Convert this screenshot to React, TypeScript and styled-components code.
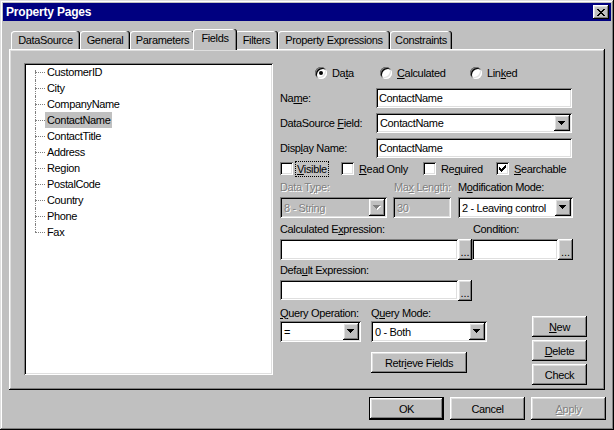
import React from "react";
import styled, { createGlobalStyle, css } from "styled-components";

const GlobalStyle = createGlobalStyle`
  html, body { margin: 0; padding: 0; background: #c0c0c0; }
  body {
    font-family: "Liberation Sans", Arial, sans-serif;
    font-size: 11px;
    letter-spacing: -0.35px;
    color: #000;
  }
  * { box-sizing: border-box; }
`;

const raised = css`
  box-shadow: inset -1px -1px #000, inset 1px 1px #fff, inset -2px -2px #808080, inset 2px 2px #dfdfdf;
`;

const sunken = css`
  box-shadow: inset 1px 1px #808080, inset -1px -1px #fff, inset 2px 2px #000, inset -2px -2px #dfdfdf;
`;

const disabledText = css`
  color: #808080;
  text-shadow: 1px 1px #fff;
`;

const Window = styled.div`
  width: 614px;
  height: 430px;
  padding: 3px;
  background: #c0c0c0;
  display: flex;
  flex-direction: column;
  box-shadow: inset -1px -1px #000, inset 1px 1px #dfdfdf, inset -2px -2px #808080, inset 2px 2px #fff;
`;

const TitleBar = styled.div`
  height: 18px;
  background: #000080;
  display: flex;
  align-items: center;
  padding: 0 2px 0 3px;
`;

const Title = styled.span`
  flex: 1;
  color: #fff;
  font-weight: bold;
  font-size: 12px;
  letter-spacing: -0.2px;
`;

const CloseButton = styled.span`
  width: 16px;
  height: 14px;
  background: #c0c0c0;
  display: flex;
  align-items: center;
  justify-content: center;
  padding-right: 1px;
  ${raised}
`;

const Body = styled.div`
  flex: 1;
  display: flex;
  flex-direction: column;
  padding: 8px 0 0 6px;
`;

const TabStrip = styled.div`
  display: flex;
  align-items: flex-end;
  height: 20px;
  padding-left: 2px;
`;

const Tab = styled.div<{ $active?: boolean; $w: number }>`
  width: ${(p) => p.$w}px;
  height: ${(p) => (p.$active ? 21 : 18)}px;
  margin: 0 ${(p) => (p.$active ? -2 : 0)}px ${(p) => (p.$active ? -1 : 0)}px;
  padding-top: ${(p) => (p.$active ? 3 : 3)}px;
  position: relative;
  z-index: ${(p) => (p.$active ? 2 : 0)};
  text-align: center;
  background: #c0c0c0;
  border-radius: 3px 3px 0 0;
  white-space: nowrap;
  box-shadow: inset -1px 0 #000, inset -2px 0 #808080, inset 1px 1px #fff;
`;

const Panel = styled.div`
  width: 596px;
  height: 341px;
  display: flex;
  gap: 7px;
  padding: 14px 0 0 15px;
  ${raised}
`;

const TreeBox = styled.div`
  width: 249px;
  height: 312px;
  background: #fff;
  padding: 1px 0 0 11px;
  ${sunken}
`;

const TreeList = styled.ul`
  list-style: none;
  margin: 0;
  padding: 0;
`;

const TreeItem = styled.li<{ $first?: boolean; $last?: boolean }>`
  height: 16px;
  display: flex;
  align-items: center;
  position: relative;

  &::before {
    content: "";
    position: absolute;
    left: 0;
    top: ${(p) => (p.$first ? "6px" : "0")};
    bottom: ${(p) => (p.$last ? "8px" : "0")};
    border-left: 1px dotted #808080;
  }
`;

const Connector = styled.span`
  width: 10px;
  border-top: 1px dotted #808080;
`;

const ItemText = styled.span<{ $selected?: boolean }>`
  line-height: 16px;
  padding: 0 2px;
  background: ${(p) => (p.$selected ? "#c0c0c0" : "transparent")};
`;

const FormColumn = styled.div`
  width: 294px;
  display: flex;
  flex-direction: column;
`;

const Row = styled.div<{ $mt?: number; $h: number }>`
  display: flex;
  align-items: center;
  height: ${(p) => p.$h}px;
  margin-top: ${(p) => p.$mt ?? 0}px;
  white-space: nowrap;
`;

const Caption = styled.span<{ $w?: number; $off?: number; $disabled?: boolean }>`
  width: ${(p) => (p.$w ? `${p.$w}px` : "auto")};
  margin-left: ${(p) => p.$off ?? 0}px;
  flex: none;
  ${(p) => p.$disabled && disabledText}
`;

const Option = styled.label<{ $w?: number; $off?: number }>`
  display: flex;
  align-items: center;
  gap: 5px;
  width: ${(p) => (p.$w ? `${p.$w}px` : "auto")};
  margin-left: ${(p) => p.$off ?? 0}px;
  flex: none;
`;

const RadioMark = styled.span<{ $checked?: boolean }>`
  width: 12px;
  height: 12px;
  flex: none;
  border-radius: 50%;
  background: #fff;
  display: flex;
  align-items: center;
  justify-content: center;
  box-shadow: inset 1px 1px #808080, inset -1px -1px #fff, inset 2px 2px #000, inset -2px -2px #dfdfdf;

  &::after {
    content: "";
    width: 4px;
    height: 4px;
    border-radius: 50%;
    background: ${(p) => (p.$checked ? "#000" : "transparent")};
  }
`;

const CheckMark = styled.span`
  width: 13px;
  height: 13px;
  flex: none;
  background: #fff;
  display: flex;
  ${sunken}
`;

const Focus = styled.span`
  outline: 1px dotted #000;
  outline-offset: 0;
  padding: 0 1px;
  margin-left: -2px;
  line-height: 14px;
`;

const TextBox = styled.div<{ $w: number; $h?: number; $disabled?: boolean }>`
  width: ${(p) => p.$w}px;
  height: ${(p) => p.$h ?? 21}px;
  flex: none;
  display: flex;
  align-items: center;
  padding: 0 3px;
  background: ${(p) => (p.$disabled ? "#c0c0c0" : "#fff")};
  ${(p) => p.$disabled && disabledText}
  ${sunken}
`;

const ComboBox = styled.div<{ $w: number; $h?: number; $off?: number; $disabled?: boolean }>`
  width: ${(p) => p.$w}px;
  height: ${(p) => p.$h ?? 21}px;
  margin-left: ${(p) => p.$off ?? 0}px;
  flex: none;
  display: flex;
  padding: 2px;
  background: ${(p) => (p.$disabled ? "#c0c0c0" : "#fff")};
  ${sunken}
`;

const ComboValue = styled.span<{ $disabled?: boolean }>`
  flex: 1;
  display: flex;
  align-items: center;
  padding-left: 2px;
  overflow: hidden;
  ${(p) => p.$disabled && disabledText}
`;

const DropButton = styled.span`
  width: 16px;
  flex: none;
  display: flex;
  align-items: center;
  justify-content: center;
  background: #c0c0c0;
  ${raised}
`;

const EllipsisButton = styled.span<{ $w: number }>`
  width: ${(p) => p.$w}px;
  height: 21px;
  flex: none;
  display: flex;
  align-items: flex-end;
  justify-content: center;
  padding-bottom: 4px;
  line-height: 8px;
  letter-spacing: 0;
  background: #c0c0c0;
  ${raised}
`;

const Bottom = styled.div`
  display: flex;
  margin-top: 6px;
`;

const QueryColumn = styled.div`
  width: 207px;
  display: flex;
  flex-direction: column;
`;

const SideButtons = styled.div`
  display: flex;
  flex-direction: column;
  gap: 3px;
  margin: 10px 0 0 45px;
`;

const PushButton = styled.button<{ $w: number; $h: number; $off?: number; $default?: boolean }>`
  width: ${(p) => p.$w}px;
  height: ${(p) => p.$h}px;
  margin: 0 0 0 ${(p) => p.$off ?? 0}px;
  padding: 0;
  font: inherit;
  letter-spacing: inherit;
  color: #000;
  background: #c0c0c0;
  border: ${(p) => (p.$default ? "1px solid #000" : "none")};
  ${raised}

  &:disabled {
    ${disabledText}
  }
`;

const DialogButtons = styled.div`
  display: flex;
  justify-content: flex-end;
  gap: 6px;
  margin-top: 7px;
  padding-right: 5px;
`;

const Arrow = ({ disabled }: { disabled?: boolean }) => (
  <svg width="8" height="5" viewBox="0 0 8 5" shapeRendering="crispEdges">
    {disabled && (
      <path d="M1 1h7v1H1zM2 2h5v1H2zM3 3h3v1H3zM4 4h1v1H4z" fill="#fff" />
    )}
    <path d="M0 0h7v1H0zM1 1h5v1H1zM2 2h3v1H2zM3 3h1v1H3z" fill={disabled ? "#808080" : "#000"} />
  </svg>
);

const CloseGlyph = () => (
  <svg width="8" height="7" viewBox="0 0 8 7" shapeRendering="crispEdges">
    <path
      d="M0 0h2v1H0zM6 0h2v1H6zM1 1h2v1H1zM5 1h2v1H5zM2 2h4v1H2zM3 3h2v1H3zM2 4h4v1H2zM1 5h2v1H1zM5 5h2v1H5zM0 6h2v1H0zM6 6h2v1H6z"
      fill="#000"
    />
  </svg>
);

const Tick = () => (
  <svg width="13" height="13" viewBox="0 0 13 13" shapeRendering="crispEdges">
    <path
      d="M3 5h1v3H3zM4 6h1v3H4zM5 7h1v3H5zM6 6h1v3H6zM7 5h1v3H7zM8 4h1v3H8zM9 3h1v3H9z"
      fill="#000"
    />
  </svg>
);

const Combo = ({
  w,
  h,
  off,
  value,
  disabled,
}: {
  w: number;
  h?: number;
  off?: number;
  value: string;
  disabled?: boolean;
}) => (
  <ComboBox $w={w} $h={h} $off={off} $disabled={disabled}>
    <ComboValue $disabled={disabled}>{value}</ComboValue>
    <DropButton>
      <Arrow disabled={disabled} />
    </DropButton>
  </ComboBox>
);

const tabs = [
  { label: "DataSource", w: 69 },
  { label: "General", w: 50 },
  { label: "Parameters", w: 65 },
  { label: "Fields", w: 40, active: true },
  { label: "Filters", w: 43 },
  { label: "Property Expressions", w: 112 },
  { label: "Constraints", w: 62 },
];

const fields = [
  "CustomerID",
  "City",
  "CompanyName",
  "ContactName",
  "ContactTitle",
  "Address",
  "Region",
  "PostalCode",
  "Country",
  "Phone",
  "Fax",
];

export default function App() {
  return (
    <>
      <GlobalStyle />
      <Window>
        <TitleBar>
          <Title>Property Pages</Title>
          <CloseButton>
            <CloseGlyph />
          </CloseButton>
        </TitleBar>
        <Body>
          <TabStrip>
            {tabs.map((t) => (
              <Tab key={t.label} $w={t.active ? t.w + 4 : t.w} $active={t.active}>
                {t.label}
              </Tab>
            ))}
          </TabStrip>
          <Panel>
            <TreeBox>
              <TreeList>
                {fields.map((f, i) => (
                  <TreeItem key={f} $first={i === 0} $last={i === fields.length - 1}>
                    <Connector />
                    <ItemText $selected={f === "ContactName"}>{f}</ItemText>
                  </TreeItem>
                ))}
              </TreeList>
            </TreeBox>

            <FormColumn>
              <Row $h={20}>
                <Option $w={65} $off={35}>
                  <RadioMark $checked />
                  <span>
                    Da<u>t</u>a
                  </span>
                </Option>
                <Option $w={90}>
                  <RadioMark />
                  <span>
                    <u>C</u>alculated
                  </span>
                </Option>
                <Option>
                  <RadioMark />
                  <span>
                    Lin<u>k</u>ed
                  </span>
                </Option>
              </Row>

              <Row $mt={5} $h={20}>
                <Caption $w={96}>
                  Na<u>m</u>e:
                </Caption>
                <TextBox $w={196} $h={20}>ContactName</TextBox>
              </Row>
              <Row $mt={5} $h={20}>
                <Caption $w={96}>
                  DataSource <u>F</u>ield:
                </Caption>
                <Combo w={196} h={20} value="ContactName" />
              </Row>
              <Row $mt={5} $h={20}>
                <Caption $w={96}>
                  Disp<u>l</u>ay Name:
                </Caption>
                <TextBox $w={196} $h={20}>ContactName</TextBox>
              </Row>

              <Row $mt={2} $h={17}>
                <Option $w={61}>
                  <CheckMark />
                  <Focus>
                    <u>V</u>isible
                  </Focus>
                </Option>
                <Option $w={82}>
                  <CheckMark />
                  <span>
                    <u>R</u>ead Only
                  </span>
                </Option>
                <Option $w={73}>
                  <CheckMark />
                  <span>
                    Re<u>q</u>uired
                  </span>
                </Option>
                <Option>
                  <CheckMark>
                    <Tick />
                  </CheckMark>
                  <span>
                    <u>S</u>earchable
                  </span>
                </Option>
              </Row>

              <Row $mt={3} $h={13}>
                <Caption $w={114} $disabled>
                  Data T<u>y</u>pe:
                </Caption>
                <Caption $w={64} $disabled>
                  Ma<u>x</u> Length:
                </Caption>
                <Caption>
                  M<u>o</u>dification Mode:
                </Caption>
              </Row>
              <Row $mt={4} $h={21}>
                <Combo w={107} value="8 - String" disabled />
                <ComboBox as="div" $w={58} $off={6} $disabled>
                  <ComboValue $disabled>30</ComboValue>
                </ComboBox>
                <Combo w={115} off={7} value="2 - Leaving control" />
              </Row>

              <Row $mt={4} $h={13}>
                <Caption $w={193}>
                  Calculated E<u>x</u>pression:
                </Caption>
                <Caption>Condition:</Caption>
              </Row>
              <Row $mt={4} $h={21}>
                <TextBox $w={178} />
                <EllipsisButton $w={14}>...</EllipsisButton>
                <TextBox $w={86} />
                <EllipsisButton $w={15}>...</EllipsisButton>
              </Row>

              <Row $mt={3} $h={13}>
                <Caption>
                  Defa<u>u</u>lt Expression:
                </Caption>
              </Row>
              <Row $mt={4} $h={20}>
                <TextBox $w={178} $h={20} />
                <EllipsisButton $w={14}>...</EllipsisButton>
              </Row>

              <Bottom>
                <QueryColumn>
                  <Row $h={13}>
                    <Caption $w={91}>
                      <u>Q</u>uery Operation:
                    </Caption>
                    <Caption>
                      Q<u>u</u>ery Mode:
                    </Caption>
                  </Row>
                  <Row $mt={2} $h={21}>
                    <Combo w={81} value="=" />
                    <Combo w={116} off={10} value="0 - Both" />
                  </Row>
                  <Row $mt={10} $h={21}>
                    <PushButton $w={96} $h={21} $off={91}>
                      Retr<u>i</u>eve Fields
                    </PushButton>
                  </Row>
                </QueryColumn>
                <SideButtons>
                  <PushButton $w={55} $h={21}>
                    <u>N</u>ew
                  </PushButton>
                  <PushButton $w={55} $h={21}>
                    <u>D</u>elete
                  </PushButton>
                  <PushButton $w={55} $h={21}>
                    Check
                  </PushButton>
                </SideButtons>
              </Bottom>
            </FormColumn>
          </Panel>

          <DialogButtons>
            <PushButton $w={75} $h={23} $default>
              OK
            </PushButton>
            <PushButton $w={75} $h={23}>
              Cancel
            </PushButton>
            <PushButton $w={75} $h={23} disabled>
              <u>A</u>pply
            </PushButton>
          </DialogButtons>
        </Body>
      </Window>
    </>
  );
}
